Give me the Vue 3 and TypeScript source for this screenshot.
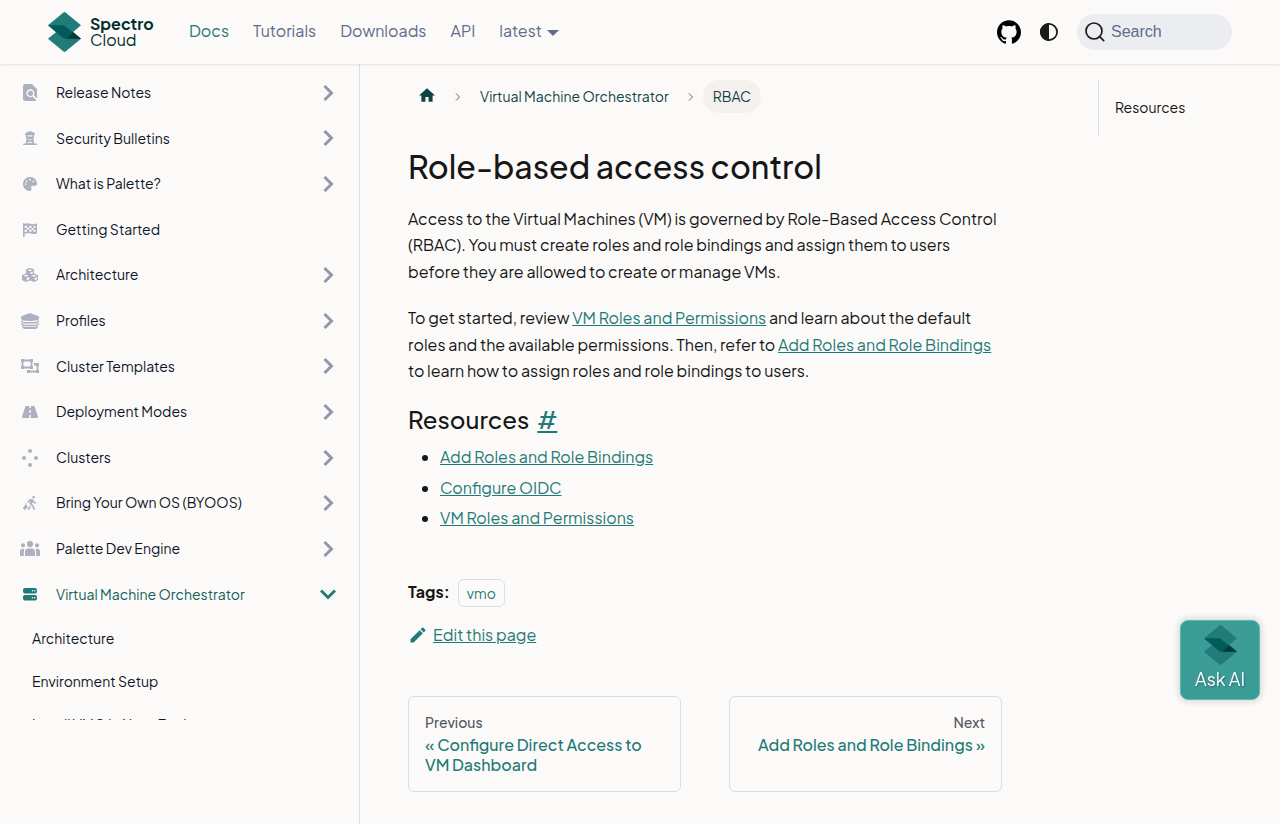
<script setup lang="ts">
interface Category {
  label: string
  icon: string
  viewBox: string
  width: number
  expandable: boolean
  active?: boolean
}

const navLinks: { label: string; active?: boolean }[] = [
  { label: 'Docs', active: true },
  { label: 'Tutorials' },
  { label: 'Downloads' },
  { label: 'API' },
]

const categories: Category[] = [
  {
    label: 'Release Notes', viewBox: '0 0 14 17', width: 14, expandable: true,
    icon: 'M2 0h7l5 5v9.500l-3.200-3.200A4 4 0 1 0 9.500 12.600l3.800 3.800q-.5.600-1.300.600H2q-2 0-2-2V2q0-2 2-2zM7.500 6.700a2.600 2.600 0 1 1 0 5.200 2.600 2.600 0 0 1 0-5.200z',
  },
  {
    label: 'Security Bulletins', viewBox: '0 0 14 14', width: 14, expandable: true,
    icon: 'M6.500.2q.5-.3 1 0L11.400 2q.7.400.6 1.100-.2.900-1 .9v2.500q0 .7-.7.700l.9 5.300H13q1 0 1 .8T13 14H1q-1 0-1-.700t1-.8h1.800l.9-5.300Q3 7.200 3 6.500V4q-.8 0-1-.9-.1-.7.600-1.100zM4.500 4.200v1.300h5V4.200zM5.200 8 5.100 8.800l1.900.8 1.900-.8L8.800 8 7 8.700zM4.700 11.400l-.1.900h1L7 11.500l1.400.8h1l-.1-.9L7 10.400z',
  },
  {
    label: 'What is Palette?', viewBox: '0 0 512 512', width: 14, expandable: true,
    icon: 'M512 256v3c0 36-34 61-71 61h-97a48 48 0 0 0-45 64c6 10 13 21 13 35 0 50-21 91-53 93h-3C115 512 0 397 0 256S115 0 256 0s256 115 256 256zM128 256a32 32 0 1 0-64 0 32 32 0 0 0 64 0zm0-64a32 32 0 1 0 0-64 32 32 0 0 0 0 64zm160-96a32 32 0 1 0-64 0 32 32 0 0 0 64 0zm96 96a32 32 0 1 0 0-64 32 32 0 0 0 0 64z',
  },
  {
    label: 'Getting Started', viewBox: '0 0 14 14', width: 14, expandable: false,
    icon: 'M.8 0q.8 0 .8.800l2-.4Q6 0 8 1q2 .8 4.500-.2Q14 .2 14 1.400v8.200q0 .6-.6.800-3 1.200-5.400.2-2-.9-4.500-.3l-1.900.4v2.500q0 .8-.8.800T0 13.200V.8Q0 0 .8 0zM1.600 3v2L4 4.500v2L1.600 7v2L4 8.500v-2l2.300.1v2L8.500 9V7l2 .2v2l2-.6v-2l-2 .6v-2l2-.6v-2l-2 .6v2L8.500 5V3L6.300 2.500v2L4 4.500v-2zM6.300 4.500 8.500 5v2l-2.200-.4z',
  },
  {
    label: 'Architecture', viewBox: '0 0 16 14', width: 16, expandable: true,
    icon: 'M7.500.1q.5-.2 1 0l2.700 1q.8.300.8 1.100v3.300l3.200 1.300q.8.300.8 1v3.500q0 .8-.7 1.100l-2.800 1.400q-.5.300-1 0L8 12.400l-3.500 1.400q-.5.300-1 0L.700 12.400Q0 12.100 0 11.300V7.800q0-.7.8-1L4 5.500V2.200q0-.8.800-1.100zM8 1.300 5.500 2.200 8 3.200l2.500-1zM8.700 6.400l2.100-.9V3.500l-2.100.8zM4 6.800l-2.500 1L4 8.800l2.500-1zm.7 5.600 2.500-1.200V9l-2.500 1zM12 6.800l-2.500 1 2.500 1 2.500-1zm.7 5.600 2.100-1.100V9l-2.100 1z',
  },
  {
    label: 'Profiles', viewBox: '0 0 18 16', width: 18, expandable: true,
    icon: 'M9 0l8 3q1 .5 1 1v2l-2 1.500L9 8 2 7.500 0 6V4q0-.6 1-1zM0 7l2.500 2h13L18 7v1.600l-2 1.900H2L0 8.600zM0 9.800l2.500 2h13l2.500-2v1.500l-2 1.900H2l-2-1.900zM1 13l2 1h12l2-1v1l-2 2H3l-2-2z',
  },
  {
    label: 'Cluster Templates', viewBox: '0 0 18 14', width: 18, expandable: true,
    icon: 'M0 0h3v.6h6V0h3v3h-.6v4h.6v3H9v-.6H3v.6H0V7h.6V3H0zM3 2.400V3h-.6v4H3v.6h6V7h.6V3H9v-.6zM13 4h5v3h-.6v4h.6v3h-3v-.6H9v.6H6v-3h3v.6h6V11h.6V7H15v-.6h-2z',
  },
  {
    label: 'Deployment Modes', viewBox: '0 0 16 12', width: 16, expandable: true,
    icon: 'M4.500 0H7.200v2h1.600V0h2.700q.9 0 1.200.8L15.900 10.500Q16.200 12 14.800 12H8.800V9H7.200v3H1.200Q-.2 12 .100 10.500L3.300.8Q3.600 0 4.500 0zM7.200 4v3h1.600V4z',
  },
  {
    label: 'Clusters', viewBox: '0 0 16 18', width: 16, expandable: true,
    icon: 'M8 0a2 2 0 1 1 0 4 2 2 0 0 1 0-4zM2 7a2 2 0 1 1 0 4 2 2 0 0 1 0-4zM14 7a2 2 0 1 1 0 4 2 2 0 0 1 0-4zM8 14a2 2 0 1 1 0 4 2 2 0 0 1 0-4z',
  },
  {
    label: 'Bring Your Own OS (BYOOS)', viewBox: '0 0 14 14', width: 14, expandable: true,
    icon: 'M10.600 0a1.300 1.300 0 1 1 0 2.600 1.300 1.300 0 0 1 0-2.600zM8.800 3q1.200 0 1.600 1l.7 1.500 1.600.7q.7.400.4 1-.3.600-1 .4L10.300 6.900 9.700 6 9 8l1.700 1.800 1.200 3.200q.2.800-.5 1-.7.100-1-.5l-1.100-2.900L7 8.500Q6.300 7.800 6.600 7l.8-2.200-.9.500-.6 1.400q-.3.600-.9.300-.7-.3-.4-1l.8-1.900Q7 3 8.800 3zM6.500 9.600l1.200 1.200-.5 1.200-1.300 1.700q-.5.500-1 .1-.6-.4-.2-1l1.200-1.600zM2.800 7l.8.900-.7.700 1.700 1.700q.5.500 0 1L2.300 13.600q-.6.600-1.100 0L.2 12.500q-.4-.5 0-1L2.400 8.700 2 7.800z',
  },
  {
    label: 'Palette Dev Engine', viewBox: '0 0 20 15', width: 20, expandable: true,
    icon: 'M10 0a3.100 3.100 0 1 1 0 6.200A3.100 3.100 0 0 1 10 0zM3 2.200a2.100 2.100 0 1 1 0 4.200 2.100 2.100 0 0 1 0-4.200zM17 2.200a2.100 2.100 0 1 1 0 4.200 2.100 2.100 0 0 1 0-4.200zM8.500 7.500h3Q15 7.500 15 11.500V15H5v-3.500q0-4 3.500-4zM2.800 7.700h1.800Q3.800 9 3.800 11.500V15H0v-4q0-3.300 2.800-3.300zM17.200 7.700h-1.800q.8 1.300.8 3.800V15H20v-4q0-3.300-2.800-3.300z',
  },
  {
    label: 'Virtual Machine Orchestrator', viewBox: '0 0 14 13', width: 14, expandable: true, active: true,
    icon: 'M2 0h10q2 0 2 2v1.500q0 2-2 2H2q-2 0-2-2V2q0-2 2-2zM9.500 2a.8.800 0 1 0 0 1.600.8.800 0 0 0 0-1.600zm2.300 0a.8.800 0 1 0 0 1.600.8.800 0 0 0 0-1.600zM2 7h10q2 0 2 2v1.500q0 2-2 2H2q-2 0-2-2V9q0-2 2-2zm7.500 2a.8.800 0 1 0 0 1.600.8.800 0 0 0 0-1.600zm2.300 0a.8.800 0 1 0 0 1.600.8.800 0 0 0 0-1.600z',
  },
]

const children: string[] = ['Architecture', 'Environment Setup', 'Install VMO in Nova Tools']
const resources: string[] = ['Add Roles and Role Bindings', 'Configure OIDC', 'VM Roles and Permissions']
</script>

<template>
  <div class="page">
    <header class="navbar">
      <a class="brand" href="#">
        <svg class="brand-mark" viewBox="0 0 33 40" aria-hidden="true">
          <path fill="#217b78" d="M15.500.5q1-.8 2 0L33 13.300 17.500 26.500h-2L0 13.300z" />
          <path fill="#217b78" d="M15.500 14h2L33 26.800 17.500 39.500q-1 .8-2 0L0 26.800z" />
          <path fill="#005c5a" d="M0 13.300h14q2 0 3.500 1.200L33 26.800H18q-2 0-3.500-1.200z" />
          <path fill="#063a3a" d="M25.300 20.300 33 26.800H18.600z" />
        </svg>
        <span class="brand-name"><b>Spectro</b><span>Cloud</span></span>
      </a>
      <nav class="nav-links" aria-label="Main">
        <a v-for="link in navLinks" :key="link.label" href="#" :class="{ active: link.active }">{{ link.label }}</a>
        <a href="#" class="version">latest</a>
      </nav>
      <div class="nav-tools">
        <a href="#" class="github" aria-label="GitHub repository">
          <svg viewBox="0 0 24 24" width="24" height="24"><path d="M12 .297c-6.630 0-12 5.373-12 12 0 5.303 3.438 9.800 8.205 11.385.6.113.82-.258.82-.577 0-.285-.01-1.040-.015-2.040-3.338.724-4.042-1.610-4.042-1.610C4.422 18.070 3.633 17.700 3.633 17.700c-1.087-.744.084-.729.084-.729 1.205.084 1.838 1.236 1.838 1.236 1.070 1.835 2.809 1.305 3.495.998.108-.776.417-1.305.76-1.605-2.665-.3-5.466-1.332-5.466-5.930 0-1.310.465-2.380 1.235-3.220-.135-.303-.54-1.523.105-3.176 0 0 1.005-.322 3.300 1.230.96-.267 1.980-.399 3-.405 1.020.006 2.040.138 3 .405 2.280-1.552 3.285-1.230 3.285-1.230.645 1.653.24 2.873.12 3.176.765.84 1.230 1.910 1.230 3.220 0 4.610-2.805 5.625-5.475 5.920.42.36.81 1.096.81 2.220 0 1.606-.015 2.896-.015 3.286 0 .315.21.69.825.57C20.565 22.092 24 17.592 24 12.297c0-6.627-5.373-12-12-12" /></svg>
        </a>
        <button class="theme" type="button" aria-label="Switch colour theme">
          <svg viewBox="0 0 18 18" width="18" height="18"><circle cx="9" cy="9" r="8.100" fill="none" stroke="#1b1b18" stroke-width="1.800" /><path fill="#1b1b18" d="M9 0a9 9 0 0 0 0 18z" /></svg>
        </button>
        <button class="search" type="button">
          <svg viewBox="0 0 20 20" width="20" height="20" aria-hidden="true"><path fill="none" stroke="#1b1b18" stroke-width="1.700" stroke-linecap="round" d="M14.400 14.400l4.300 4.300M9 1a8 8 0 1 1 0 16A8 8 0 0 1 9 1z" /></svg>
          <span>Search</span>
        </button>
      </div>
    </header>

    <div class="body">
      <aside class="sidebar">
        <nav class="menu" aria-label="Docs sidebar">
          <ul class="categories">
            <li v-for="item in categories" :key="item.label">
              <a href="#" class="category" :class="{ active: item.active }">
                <span class="icon"><svg :viewBox="item.viewBox" :width="item.width" aria-hidden="true"><path fill-rule="evenodd" :d="item.icon" /></svg></span>
                <span class="label">{{ item.label }}</span>
                <svg v-if="item.expandable" class="caret" viewBox="0 0 16 16" width="16" height="16" aria-hidden="true">
                  <path d="M4.500 1l7 7-7 7" />
                </svg>
              </a>
            </li>
          </ul>
          <ul class="children">
            <li v-for="child in children" :key="child"><a href="#">{{ child }}</a></li>
          </ul>
        </nav>
      </aside>

      <main class="content">
        <article>
          <nav class="crumbs" aria-label="Breadcrumbs">
            <a href="#" class="home" aria-label="Home page">
              <svg viewBox="2 3 20 17" width="16" height="14"><path d="M10 20v-6h4v6h5v-8h3L12 3 2 12h3v8z" /></svg>
            </a>
            <svg class="sep" viewBox="0 0 6 8" width="6" height="8" aria-hidden="true"><path d="M1 .5 4.500 4 1 7.500" /></svg>
            <a href="#">Virtual Machine Orchestrator</a>
            <svg class="sep" viewBox="0 0 6 8" width="6" height="8" aria-hidden="true"><path d="M1 .5 4.500 4 1 7.500" /></svg>
            <span class="current">RBAC</span>
          </nav>
          <h1>Role-based access control</h1>
          <p>Access to the Virtual Machines (VM) is governed by Role-Based Access Control (RBAC). You must create roles and role bindings and assign them to users before they are allowed to create or manage VMs.</p>
          <p>To get started, review <a href="#">VM Roles and Permissions</a> and learn about the default roles and the available permissions. Then, refer to <a href="#">Add Roles and Role Bindings</a> to learn how to assign roles and role bindings to users.</p>
          <h2 id="resources">Resources<a href="#resources">#</a></h2>
          <ul class="resources">
            <li v-for="item in resources" :key="item"><a href="#">{{ item }}</a></li>
          </ul>
          <div class="tags"><b>Tags:</b><a href="#">vmo</a></div>
          <a href="#" class="edit">
            <svg viewBox="0 0 40 40" width="20" height="20" aria-hidden="true"><path d="M34.500 11.700l-3 3.100-6.300-6.300 3.100-3q.5-.5 1.200-.5t1.100.5l3.900 3.900q.5.400.5 1.100t-.5 1.200zM5 28.700 23.400 10.300l6.300 6.300L11.300 35H5z" /></svg>
            <span>Edit this page</span>
          </a>
          <nav class="pager" aria-label="Docs pages">
            <a href="#"><small>Previous</small><span>« Configure Direct Access to VM Dashboard</span></a>
            <a href="#" class="next"><small>Next</small><span>Add Roles and Role Bindings »</span></a>
          </nav>
        </article>
        <aside class="toc"><nav aria-label="On this page"><a href="#resources">Resources</a></nav></aside>
      </main>
    </div>

    <button class="ask" type="button">
      <svg viewBox="0 0 33 40" width="33" height="40" aria-hidden="true">
        <path fill="#217b78" d="M15.500.5q1-.8 2 0L33 13.300 17.500 26.500h-2L0 13.300z" />
        <path fill="#217b78" d="M15.500 14h2L33 26.800 17.500 39.500q-1 .8-2 0L0 26.800z" />
        <path fill="#005c5a" d="M0 13.300h14q2 0 3.500 1.200L33 26.800H18q-2 0-3.500-1.200z" />
        <path fill="#063a3a" d="M25.300 20.300 33 26.800H18.600z" />
      </svg>
      <span>Ask AI</span>
    </button>
  </div>
</template>

<style>
body {
  background: #fbfaf8;
}
</style>

<style scoped>
.page {
  display: flex;
  flex-direction: column;
  min-height: 100vh;
  font-family: "Plus Jakarta Sans", Inter, "Liberation Sans", sans-serif;
  font-size: 16px;
  line-height: 1.65;
  text-rendering: optimizeLegibility;
  -webkit-font-smoothing: antialiased;
  color: #161616;
}

.page *,
.page {
  box-sizing: border-box;
}

a {
  color: #1f7a78;
  text-decoration: none;
}

ul {
  margin: 0;
  padding: 0;
  list-style: none;
}

button {
  padding: 0;
  border: 0;
  background: none;
  cursor: pointer;
}

svg {
  display: block;
  flex: none;
}

.navbar {
  display: flex;
  align-items: center;
  height: 64px;
  padding: 0 48px;
  background: #fbfaf8;
  box-shadow: 0 1px 2px rgba(0, 0, 0, 0.1);
  z-index: 1;
}

.brand {
  display: flex;
  align-items: center;
  gap: 9px;
  width: 129px;
  color: #04302f;
}

.brand-mark {
  width: 33px;
  height: 40px;
}

.brand-name {
  display: flex;
  flex-direction: column;
  font-size: 16px;
  line-height: 16px;
}

.nav-links {
  display: flex;
  gap: 24px;
  padding: 0 0 2px 12px;
}

.nav-links a {
  color: #5f6b8c;
}

.nav-links a.active {
  color: #1f7a78;
}

.version::after {
  content: "";
  display: inline-block;
  margin-left: 5px;
  border: 6px solid transparent;
  border-top-color: currentColor;
  border-bottom: 0;
  vertical-align: middle;
}

.nav-tools {
  display: flex;
  align-items: center;
  margin-left: auto;
}

.theme {
  margin: 0 19px;
}

.search {
  display: flex;
  align-items: center;
  gap: 6px;
  width: 155px;
  height: 36px;
  padding: 0 8px;
  border-radius: 18px;
  background: #ebedf0;
  color: #5f6b8c;
  font: 16px "Liberation Sans", sans-serif;
}

.body {
  display: flex;
  flex: 1;
}

.sidebar {
  flex: none;
  width: 360px;
  border-right: 1px solid #dadde1;
}

.menu {
  height: calc(100vh - 168px);
  padding: 8px 16px 0;
  overflow: hidden;
  font-size: 14px;
  line-height: 1.4;
}

.categories {
  display: flex;
  flex-direction: column;
  gap: 4px;
}

.category {
  display: flex;
  align-items: center;
  padding: 11px 7px 11px 4px;
  color: #0e1428;
}

.category.active {
  color: #115e5b;
}

.icon {
  display: flex;
  justify-content: center;
  width: 20px;
  margin-right: 16px;
  fill: #acb0bf;
}

.label {
  flex: 1;
}

.caret {
  fill: none;
  stroke: #9497aa;
  stroke-width: 3;
}

.active .icon {
  fill: #1f7a78;
}

.active .caret {
  stroke: #1f7a78;
  transform: rotate(90deg);
}

.children {
  margin-top: 2px;
  line-height: 19px;
}

.children a {
  display: block;
  padding: 12px 16px;
  color: #0e1428;
}

.content {
  display: grid;
  grid-template-columns: 3fr 1fr;
  align-items: start;
  flex: 1;
  padding-top: 16px;
}

article {
  padding: 0 48px 32px;
}

.crumbs {
  display: flex;
  align-items: center;
  font-size: 14px;
  line-height: 17px;
}

.crumbs a,
.current {
  padding: 8px 10px;
  color: #0f4443;
}

.crumbs .home {
  padding: 8px 11px 11px;
}

.home svg {
  fill: #0f4443;
}

.sep {
  margin: 0 9px;
  fill: none;
  stroke: #666;
}

.current {
  border-radius: 17px;
  background: #f4f0ed;
}

h1 {
  margin: 33px 0 20px;
  font-size: 32px;
  font-weight: 500;
  line-height: 40px;
}

p {
  margin: 0 0 20px;
}

p a,
.resources a,
h2 a {
  text-decoration: underline;
}

h2 {
  margin: 0 0 10px;
  font-size: 24px;
  font-weight: 500;
  line-height: 30px;
}

h2 a {
  margin-left: 8px;
}

.resources {
  display: flex;
  flex-direction: column;
  gap: 4px;
  padding-left: 32px;
  list-style: disc;
}

.tags {
  display: flex;
  align-items: center;
  gap: 8px;
  margin-top: 47px;
}

.tags a {
  padding: 1px 8px;
  border: 1px solid #dadde1;
  border-radius: 6px;
  font-size: 14px;
  line-height: 24px;
}

.edit {
  display: flex;
  align-items: center;
  gap: 5px;
  width: fit-content;
  margin-top: 15px;
}

.edit svg {
  fill: #1f7a78;
}

.edit span {
  text-decoration: underline;
}

.pager {
  display: grid;
  grid-template-columns: 1fr 1fr;
  gap: 48px;
  margin-top: 48px;
}

.pager a {
  display: flex;
  flex-direction: column;
  gap: 4px;
  padding: 16px;
  border: 1px solid #dadde1;
  border-radius: 6px;
  font-weight: 500;
  line-height: 20px;
}

.pager small {
  font-size: 14px;
  line-height: 18px;
  color: #525860;
}

.next {
  text-align: right;
}

.toc {
  padding: 0 48px;
}

.toc nav {
  padding: 16px;
  border-left: 1px solid #dadde1;
  font-size: 14px;
}

.toc a {
  color: #161616;
}

.ask {
  position: fixed;
  right: 20px;
  bottom: 124px;
  display: flex;
  flex-direction: column;
  align-items: center;
  width: 80px;
  height: 80px;
  padding-top: 4px;
  border: 1px solid #56bdb5;
  border-radius: 8px;
  background: #3c9c98;
  box-shadow: 0 0 8px rgba(0, 0, 0, 0.2);
  color: #fff;
  font-family: inherit;
  font-size: 18px;
  line-height: 28px;
  text-shadow: 1px 1px 2px rgba(0, 0, 0, 0.3);
}
</style>
